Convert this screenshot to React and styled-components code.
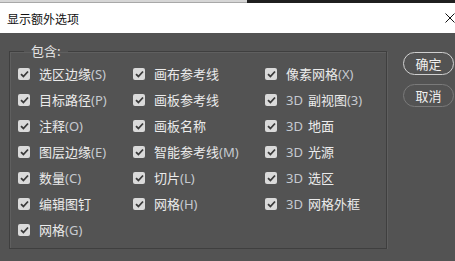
import React from 'react';
import styled, { createGlobalStyle } from 'styled-components';

const GlobalStyle = createGlobalStyle`
  html, body {
    margin: 0;
    padding: 0;
    background: #535353;
    font-family: "Noto Sans CJK SC", "Noto Sans", sans-serif;
  }
`;

const columns = [
  [
    { zh: '选区边缘', en: '(S)' },
    { zh: '目标路径', en: '(P)' },
    { zh: '注释', en: '(O)' },
    { zh: '图层边缘', en: '(E)' },
    { zh: '数量', en: '(C)' },
    { zh: '编辑图钉' },
    { zh: '网格', en: '(G)' },
  ],
  [
    { zh: '画布参考线' },
    { zh: '画板参考线' },
    { zh: '画板名称' },
    { zh: '智能参考线', en: '(M)' },
    { zh: '切片', en: '(L)' },
    { zh: '网格', en: '(H)' },
  ],
  [
    { zh: '像素网格', en: '(X)' },
    { pre: '3D', zh: '副视图', en: '(3)' },
    { pre: '3D', zh: '地面' },
    { pre: '3D', zh: '光源' },
    { pre: '3D', zh: '选区' },
    { pre: '3D', zh: '网格外框' },
  ],
];

function Option({ item }) {
  return (
    <OptionRow>
      <Box>
        <svg width="9" height="8" viewBox="0 0 9 8">
          <path d="M1 4.2 L3.4 6.5 L8 1.5" fill="none" stroke="#3a3a3a" strokeWidth="1.8" />
        </svg>
      </Box>
      <Label>
        {item.pre && <Latin $gap>{item.pre}</Latin>}
        {item.zh}
        {item.en && <Latin>{item.en}</Latin>}
      </Label>
    </OptionRow>
  );
}

export default function App() {
  return (
    <>
      <GlobalStyle />
      <TopStrip>
        <StripLeft />
        <StripRight />
      </TopStrip>
      <TitleBar>
        <Title>显示额外选项</Title>
        <CloseIcon width="10" height="10" viewBox="0 0 10 10">
          <path d="M0.5 0.5 L9.5 9.5 M9.5 0.5 L0.5 9.5" stroke="#111" strokeWidth="1" />
        </CloseIcon>
      </TitleBar>
      <Body>
        <Group>
          <Legend>包含:</Legend>
          <Grid>
            {columns.map((col, i) => (
              <Column key={i} $w={[115, 132, 110][i]}>
                {col.map((item, j) => (
                  <Option key={j} item={item} />
                ))}
              </Column>
            ))}
          </Grid>
        </Group>
        <Buttons>
          <Button $primary>确定</Button>
          <Button>取消</Button>
        </Buttons>
      </Body>
    </>
  );
}

const TopStrip = styled.div`
  display: flex;
  height: 3px;
`;

const StripLeft = styled.div`
  width: 247px;
  background: #d6d6d6;
  border-bottom: 1px solid #a8a8a8;
  box-sizing: border-box;
`;

const StripRight = styled.div`
  flex: 1;
  background: #1f1f1f;
`;

const TitleBar = styled.div`
  height: 30px;
  background: #ffffff;
  display: flex;
  align-items: center;
  justify-content: space-between;
  padding: 0 0 0 7px;
`;

const Title = styled.span`
  font-size: 12px;
  color: #111;
  line-height: 14px;
  margin-top: 1px;
`;

const CloseIcon = styled.svg`
  margin-right: 0;
  margin-top: 0;
`;

const Body = styled.div`
  display: flex;
  align-items: flex-start;
  padding: 10px 1px 0 9px;
`;

const Group = styled.fieldset`
  margin: 0;
  width: 378px;
  box-sizing: border-box;
  padding: 0 0 5px 8px;
  border: 1px solid #3f3f3f;
  box-shadow: inset 1px 1px 0 #5f5f5f, 1px 1px 0 #5f5f5f;
`;

const Legend = styled.legend`
  margin-left: 6px;
  padding: 0 7px;
  font-size: 13px;
  line-height: 16px;
  color: #e6e6e6;
`;

const Grid = styled.div`
  display: flex;
  padding-top: 2px;
`;

const Column = styled.div`
  width: ${p => p.$w}px;
  display: flex;
  flex-direction: column;
`;

const OptionRow = styled.div`
  height: 26px;
  display: flex;
  align-items: center;
`;

const Box = styled.span`
  width: 12px;
  height: 12px;
  border-radius: 2px;
  background: #dadada;
  display: flex;
  align-items: center;
  justify-content: center;
  margin-right: 9px;
  flex-shrink: 0;
`;

const Label = styled.span`
  font-size: 13px;
  color: #ebebeb;
  white-space: nowrap;
  line-height: 16px;
`;

const Latin = styled.span`
  font-family: "Noto Sans", sans-serif;
  color: #c6cad0;
  font-size: 13px;
  margin-right: ${p => (p.$gap ? '5px' : '0')};
`;

const Buttons = styled.div`
  margin-left: 16px;
  margin-top: 9px;
  display: flex;
  flex-direction: column;
  gap: 9px;
`;

const Button = styled.button`
  width: 51px;
  height: 23px;
  border-radius: 12px;
  background: #535353;
  border: 1px solid ${p => (p.$primary ? '#d0d0d0' : '#7a7a7a')};
  color: #f0f0f0;
  font-family: "Noto Sans CJK SC", sans-serif;
  font-size: 13px;
  padding: 0;
  line-height: 20px;
`;
